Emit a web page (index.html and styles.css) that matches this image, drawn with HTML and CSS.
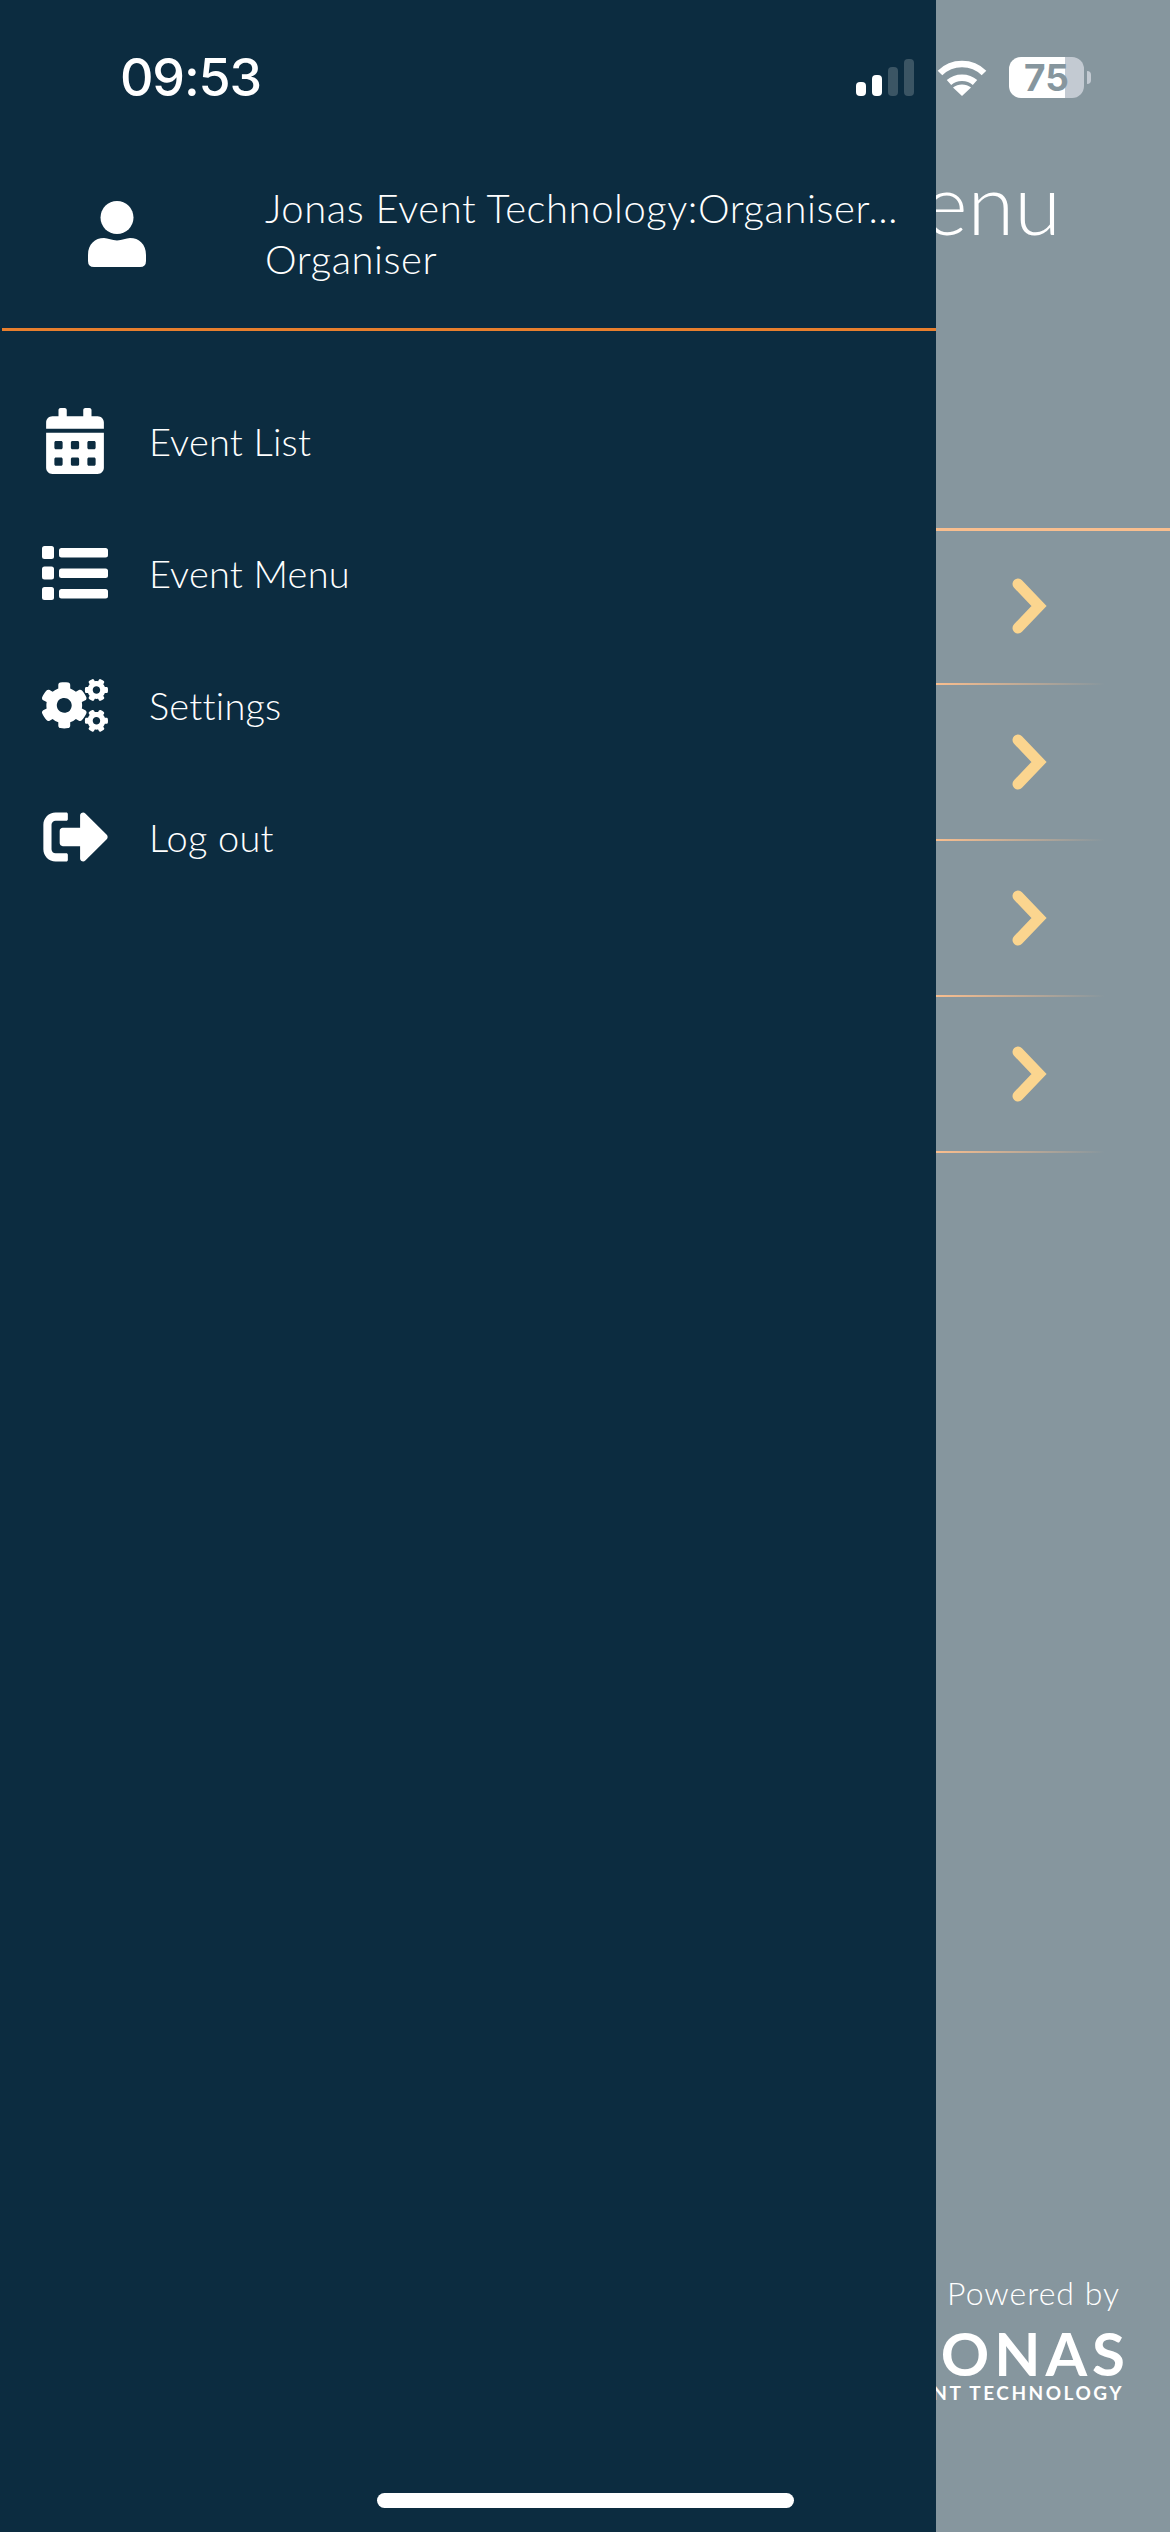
FILE: index.html
```html
<!DOCTYPE html>
<html lang="en">
<head>
    <meta charset="UTF-8">
    <meta name="viewport" content="width=device-width, initial-scale=1.0">
    <title>Event Menu</title>
    <link rel="stylesheet" href="styles.css">
</head>
<body>

<div class="screen">
    <!-- page behind the drawer -->
    <div class="page">
        <div class="page-title">Event Menu</div>
        <div class="page-rows">
            <div class="page-row">
                <svg class="chevron" viewBox="0 0 37 56"><polyline points="6,6 27,28 6,50"/></svg>
            </div>
            <div class="page-row">
                <svg class="chevron" viewBox="0 0 37 56"><polyline points="6,6 27,28 6,50"/></svg>
            </div>
            <div class="page-row">
                <svg class="chevron" viewBox="0 0 37 56"><polyline points="6,6 27,28 6,50"/></svg>
            </div>
            <div class="page-row">
                <svg class="chevron" viewBox="0 0 37 56"><polyline points="6,6 27,28 6,50"/></svg>
            </div>
        </div>
        <div class="powered">
            <div class="powered-by">Powered by</div>
            <div class="logo-name">JONAS</div>
            <div class="logo-sub">EVENT TECHNOLOGY</div>
        </div>
    </div>

    <!-- side drawer -->
    <div class="drawer">
        <div class="drawer-head">
            <svg class="avatar" viewBox="0 0 58 66">
                <ellipse cx="29" cy="16.5" rx="16.5" ry="16.5"/>
                <path d="M0 60V54C0 43 7 37 16 37C20 37 24 39.5 29 39.5C34 39.5 38 37 42 37C51 37 58 43 58 54V60Q58 66 52 66H6Q0 66 0 60Z"/>
            </svg>
            <div class="user-text">
                <div>Jonas Event Technology:Organiser…</div>
                <div>Organiser</div>
            </div>
        </div>
        <div class="menu">
            <div class="menu-item">
                <span class="menu-icon">
                    <svg class="icon-calendar" viewBox="0 0 448 512"><path d="M0 464c0 26.5 21.5 48 48 48h352c26.5 0 48-21.5 48-48V192H0v272zm320-196c0-6.6 5.4-12 12-12h40c6.6 0 12 5.4 12 12v40c0 6.6-5.4 12-12 12h-40c-6.6 0-12-5.4-12-12v-40zm0 128c0-6.6 5.4-12 12-12h40c6.6 0 12 5.4 12 12v40c0 6.6-5.4 12-12 12h-40c-6.6 0-12-5.4-12-12v-40zM192 268c0-6.6 5.4-12 12-12h40c6.6 0 12 5.4 12 12v40c0 6.6-5.4 12-12 12h-40c-6.6 0-12-5.4-12-12v-40zm0 128c0-6.6 5.4-12 12-12h40c6.6 0 12 5.4 12 12v40c0 6.6-5.4 12-12 12h-40c-6.6 0-12-5.4-12-12v-40zM64 268c0-6.6 5.4-12 12-12h40c6.6 0 12 5.4 12 12v40c0 6.6-5.4 12-12 12H76c-6.6 0-12-5.4-12-12v-40zm0 128c0-6.6 5.4-12 12-12h40c6.6 0 12 5.4 12 12v40c0 6.6-5.4 12-12 12H76c-6.6 0-12-5.4-12-12v-40zM400 64h-48V16c0-8.8-7.2-16-16-16h-32c-8.8 0-16 7.2-16 16v48H160V16c0-8.8-7.2-16-16-16h-32c-8.8 0-16 7.2-16 16v48H48C21.5 64 0 85.5 0 112v48h448v-48c0-26.5-21.5-48-48-48z"/></svg>
                </span>
                <span>Event List</span>
            </div>
            <div class="menu-item">
                <span class="menu-icon">
                    <svg class="icon-list" viewBox="0 0 66 54">
                        <rect x="0" y="0" width="12" height="13" rx="2.5"/>
                        <rect x="0" y="20.5" width="12" height="13" rx="2.5"/>
                        <rect x="0" y="41" width="12" height="13" rx="2.5"/>
                        <rect x="17" y="2" width="49" height="9.5" rx="2.5"/>
                        <rect x="17" y="22.5" width="49" height="9.5" rx="2.5"/>
                        <rect x="17" y="43" width="49" height="9.5" rx="2.5"/>
                    </svg>
                </span>
                <span>Event Menu</span>
            </div>
            <div class="menu-item">
                <span class="menu-icon">
                    <svg class="icon-cogs" viewBox="0 0 640 512"><path d="M512.1 191l-8.2 14.3c-3 5.3-9.4 7.5-15.1 5.4-11.8-4.4-22.6-10.7-32.1-18.6-4.6-3.8-5.8-10.5-2.8-15.7l8.2-14.3c-6.9-8-12.3-17.3-15.9-27.4h-16.5c-6 0-11.2-4.3-12.2-10.3-2-12-2.1-24.6 0-37.1 1-6 6.2-10.4 12.2-10.4h16.5c3.6-10.1 9-19.4 15.9-27.4l-8.2-14.3c-3-5.2-1.9-11.9 2.8-15.7 9.5-7.9 20.4-14.2 32.1-18.6 5.7-2.1 12.1.1 15.1 5.4l8.2 14.3c10.5-1.9 21.2-1.9 31.7 0L552 6.3c3-5.3 9.4-7.5 15.1-5.4 11.8 4.4 22.6 10.7 32.1 18.6 4.6 3.8 5.8 10.5 2.8 15.7l-8.2 14.3c6.9 8 12.3 17.3 15.9 27.4h16.5c6 0 11.2 4.3 12.2 10.3 2 12 2.1 24.6 0 37.1-1 6-6.2 10.4-12.2 10.4h-16.5c-3.6 10.1-9 19.4-15.9 27.4l8.2 14.3c3 5.2 1.9 11.9-2.8 15.7-9.5 7.9-20.4 14.2-32.1 18.6-5.7 2.1-12.1-.1-15.1-5.4l-8.2-14.3c-10.4 1.9-21.2 1.9-31.7 0zm-10.5-58.8c38.5 29.6 82.4-14.3 52.8-52.8-38.5-29.7-82.4 14.3-52.8 52.8zM386.3 286.1l33.7 16.8c10.1 5.8 14.5 18.1 10.5 29.1-8.9 24.2-26.4 46.4-42.6 65.8-7.4 8.9-20.2 11.1-30.3 5.3l-29.1-16.8c-16 13.7-34.6 24.6-54.9 31.7v33.6c0 11.6-8.3 21.6-19.7 23.6-24.6 4.2-50.4 4.4-75.9 0-11.5-2-20-11.9-20-23.6V418c-20.3-7.2-38.9-18-54.9-31.7L74 403c-10 5.8-22.9 3.6-30.3-5.3-16.2-19.4-33.3-41.6-42.2-65.7-4-10.9.4-23.2 10.5-29.1l33.3-16.8c-3.9-20.9-3.9-42.4 0-63.4L12 205.8c-10.1-5.8-14.6-18.1-10.5-29 8.9-24.2 26-46.4 42.2-65.8 7.4-8.9 20.2-11.1 30.3-5.3l29.1 16.8c16-13.7 34.6-24.6 54.9-31.7V57.1c0-11.5 8.2-21.5 19.6-23.5 24.6-4.2 50.5-4.4 76-.1 11.5 2 20 11.9 20 23.6v33.6c20.3 7.2 38.9 18 54.9 31.7l29.1-16.8c10-5.8 22.9-3.6 30.3 5.3 16.2 19.4 33.2 41.6 42.1 65.8 4 10.9.1 23.2-10 29.1l-33.7 16.8c3.9 21 3.9 42.5 0 63.5zm-117.6 21.1c59.2-77-28.7-164.9-105.7-105.7-59.2 77 28.7 164.9 105.7 105.7zm243.4 182.7l-8.2 14.3c-3 5.3-9.4 7.5-15.1 5.4-11.8-4.4-22.6-10.7-32.1-18.6-4.6-3.8-5.8-10.5-2.8-15.7l8.2-14.3c-6.9-8-12.3-17.3-15.9-27.4h-16.5c-6 0-11.2-4.3-12.2-10.3-2-12-2.1-24.6 0-37.1 1-6 6.2-10.4 12.2-10.4h16.5c3.6-10.1 9-19.4 15.9-27.4l-8.2-14.3c-3-5.2-1.9-11.9 2.8-15.7 9.5-7.9 20.4-14.2 32.1-18.6 5.7-2.1 12.1.1 15.1 5.4l8.2 14.3c10.5-1.9 21.2-1.9 31.7 0l8.2-14.3c3-5.3 9.4-7.5 15.1-5.4 11.8 4.4 22.6 10.7 32.1 18.6 4.6 3.8 5.8 10.5 2.8 15.7l-8.2 14.3c6.9 8 12.3 17.3 15.9 27.4h16.5c6 0 11.2 4.3 12.2 10.3 2 12 2.1 24.6 0 37.1-1 6-6.2 10.4-12.2 10.4h-16.5c-3.6 10.1-9 19.4-15.9 27.4l8.2 14.3c3 5.2 1.9 11.9-2.8 15.7-9.5 7.9-20.4 14.2-32.1 18.6-5.7 2.1-12.1-.1-15.1-5.4l-8.2-14.3c-10.4 1.9-21.2 1.9-31.7 0zM501.6 431c38.5 29.6 82.4-14.3 52.8-52.8-38.5-29.6-82.4 14.3-52.8 52.8z"/></svg>
                </span>
                <span>Settings</span>
            </div>
            <div class="menu-item">
                <span class="menu-icon">
                    <svg class="icon-logout" viewBox="0 60 504 392"><path d="M497 273L329 441c-15 15-41 4.5-41-17v-96H152c-13.3 0-24-10.7-24-24v-96c0-13.3 10.7-24 24-24h136V88c0-21.4 25.9-32 41-17l168 168c9.3 9.4 9.3 24.6 0 34zM192 436v-40c0-6.6-5.4-12-12-12H96c-17.7 0-32-14.3-32-32V160c0-17.7 14.3-32 32-32h84c6.6 0 12-5.4 12-12V76c0-6.6-5.4-12-12-12H96c-53 0-96 43-96 96v192c0 53 43 96 96 96h84c6.6 0 12-5.4 12-12z"/></svg>
                </span>
                <span>Log out</span>
            </div>
        </div>
    </div>

    <!-- phone status bar -->
    <div class="status-bar">
        <div class="time">09:53</div>
        <div class="status-icons">
            <div class="signal">
                <span class="bar bar1"></span>
                <span class="bar bar2"></span>
                <span class="bar bar3 off"></span>
                <span class="bar bar4 off"></span>
            </div>
            <svg class="wifi" viewBox="0 0 50 37">
                <path class="wifi-arc" d="M3 14C15 2 35 2 47 14"/>
                <path class="wifi-arc" d="M12 23.5C19 17 31 17 38 23.5"/>
                <path d="M25 37L16 28.5C21 24.5 29 24.5 34 28.5Z"/>
            </svg>
            <div class="battery">
                <div class="battery-body">75</div>
                <div class="battery-nub"></div>
            </div>
        </div>
    </div>

    <div class="home-bar"></div>
</div>

</body>
</html>
```

FILE: styles.css
```css
body {
    margin: 0;
    font-family: Lato, "Open Sans", sans-serif;
    background-color: #86969E;
}
.screen {
    position: relative;
    width: 1170px;
    height: 2532px;
    overflow: hidden;
    background-color: #86969E;
    color: #fff;
}

/* page behind the drawer */
.page {
    display: flex;
    flex-direction: column;
    height: 100%;
}
.page-title {
    height: 528px;
    box-sizing: border-box;
    padding: 147px 109px 0 0;
    text-align: right;
    font-size: 85px;
    line-height: 110px;
    font-weight: 300;
    white-space: nowrap;
}
.page-rows {
    border-top: 3px solid #F9BE8E;
}
.page-row {
    height: 154px;
    display: flex;
    align-items: center;
    justify-content: flex-end;
    padding-right: 121px;
    border-bottom: 2px solid;
    border-image: linear-gradient(to right, #F9BE8E 936px, rgba(249, 190, 142, 0) 1104px) 1;
}
.page-row:first-child {
    height: 150px;
    padding-bottom: 2px;
}
.chevron {
    width: 37px;
    height: 56px;
    fill: none;
    stroke: #FBD58F;
    stroke-width: 11;
    stroke-linecap: round;
    stroke-linejoin: miter;
}
.powered {
    margin-top: auto;
    margin-bottom: 129px;
    padding-right: 40px;
    text-align: right;
    white-space: nowrap;
}
.powered-by {
    font-size: 32px;
    line-height: 36px;
    font-weight: 300;
    letter-spacing: 1px;
    padding-right: 10px;
    margin-bottom: 5px;
}
.logo-name {
    font-size: 60px;
    line-height: 60px;
    margin-top: 12px;
    font-weight: 700;
    letter-spacing: 5px;
}
.logo-sub {
    font-size: 19px;
    line-height: 20px;
    font-weight: 700;
    letter-spacing: 2.5px;
    padding-right: 6px;
}

/* drawer */
.drawer {
    position: absolute;
    top: 0;
    left: 0;
    bottom: 0;
    width: 936px;
    background-color: #0C2C40;
}
.drawer-head {
    height: 331px;
    box-sizing: border-box;
    margin-left: 2px;
    padding: 140px 0 0 86px;
    display: flex;
    gap: 119px;
    align-items: center;
    border-bottom: 3px solid #E87F2E;
}
.avatar {
    width: 58px;
    height: 66px;
    fill: #fff;
    flex: none;
}
.user-text {
    font-size: 40px;
    line-height: 51px;
    font-weight: 300;
    letter-spacing: 0.55px;
    white-space: nowrap;
}
.menu {
    padding-top: 44px;
}
.menu-item {
    height: 132px;
    display: flex;
    align-items: center;
    font-size: 38px;
    font-weight: 300;
    letter-spacing: 0.2px;
}
.menu-icon {
    width: 66px;
    margin: 0 41px 0 42px;
    display: flex;
    justify-content: center;
}
.menu-icon svg {
    fill: #fff;
    display: block;
}
.icon-calendar { width: 58px; height: 66px; }
.icon-list { width: 66px; height: 54px; }
.icon-cogs { width: 66px; height: 53px; }
.icon-logout { width: 65px; height: 50px; }

/* status bar */
.status-bar {
    position: absolute;
    top: 0;
    left: 0;
    right: 0;
    height: 150px;
    display: flex;
    justify-content: space-between;
    align-items: flex-start;
    padding: 47px 79px 0 120px;
    box-sizing: border-box;
}
.time {
    font-family: Inter, sans-serif;
    font-size: 52px;
    line-height: 62px;
    font-weight: 500;
    letter-spacing: -1.2px;
}
.status-icons {
    display: flex;
    align-items: center;
    padding-top: 10px;
}
.signal {
    display: flex;
    align-items: flex-end;
    gap: 6px;
    height: 37px;
    margin-right: 23px;
}
.bar {
    width: 10px;
    border-radius: 4px;
    background-color: #fff;
}
.bar.off { background-color: #3B5564; }
.bar1 { height: 14px; }
.bar2 { height: 21px; }
.bar3 { height: 29px; }
.bar4 { height: 37px; }
.wifi {
    width: 50px;
    height: 37px;
    fill: #fff;
    margin-right: 22px;
}
.wifi-arc {
    fill: none;
    stroke: #fff;
    stroke-width: 6.5;
}
.battery {
    display: flex;
    align-items: center;
    gap: 3px;
}
.battery-body {
    width: 75px;
    height: 41px;
    border-radius: 12px;
    background: linear-gradient(to right, #fff 75%, #C3CAD2 75%);
    color: #86969E;
    font-family: Inter, sans-serif;
    font-size: 37px;
    line-height: 41px;
    font-weight: 700;
    text-align: center;
}
.battery-nub {
    width: 4px;
    height: 13px;
    border-radius: 0 6px 6px 0;
    background-color: #C3CAD2;
}

.home-bar {
    position: absolute;
    left: 377px;
    bottom: 24px;
    width: 417px;
    height: 15px;
    border-radius: 8px;
    background-color: #fff;
}
```
